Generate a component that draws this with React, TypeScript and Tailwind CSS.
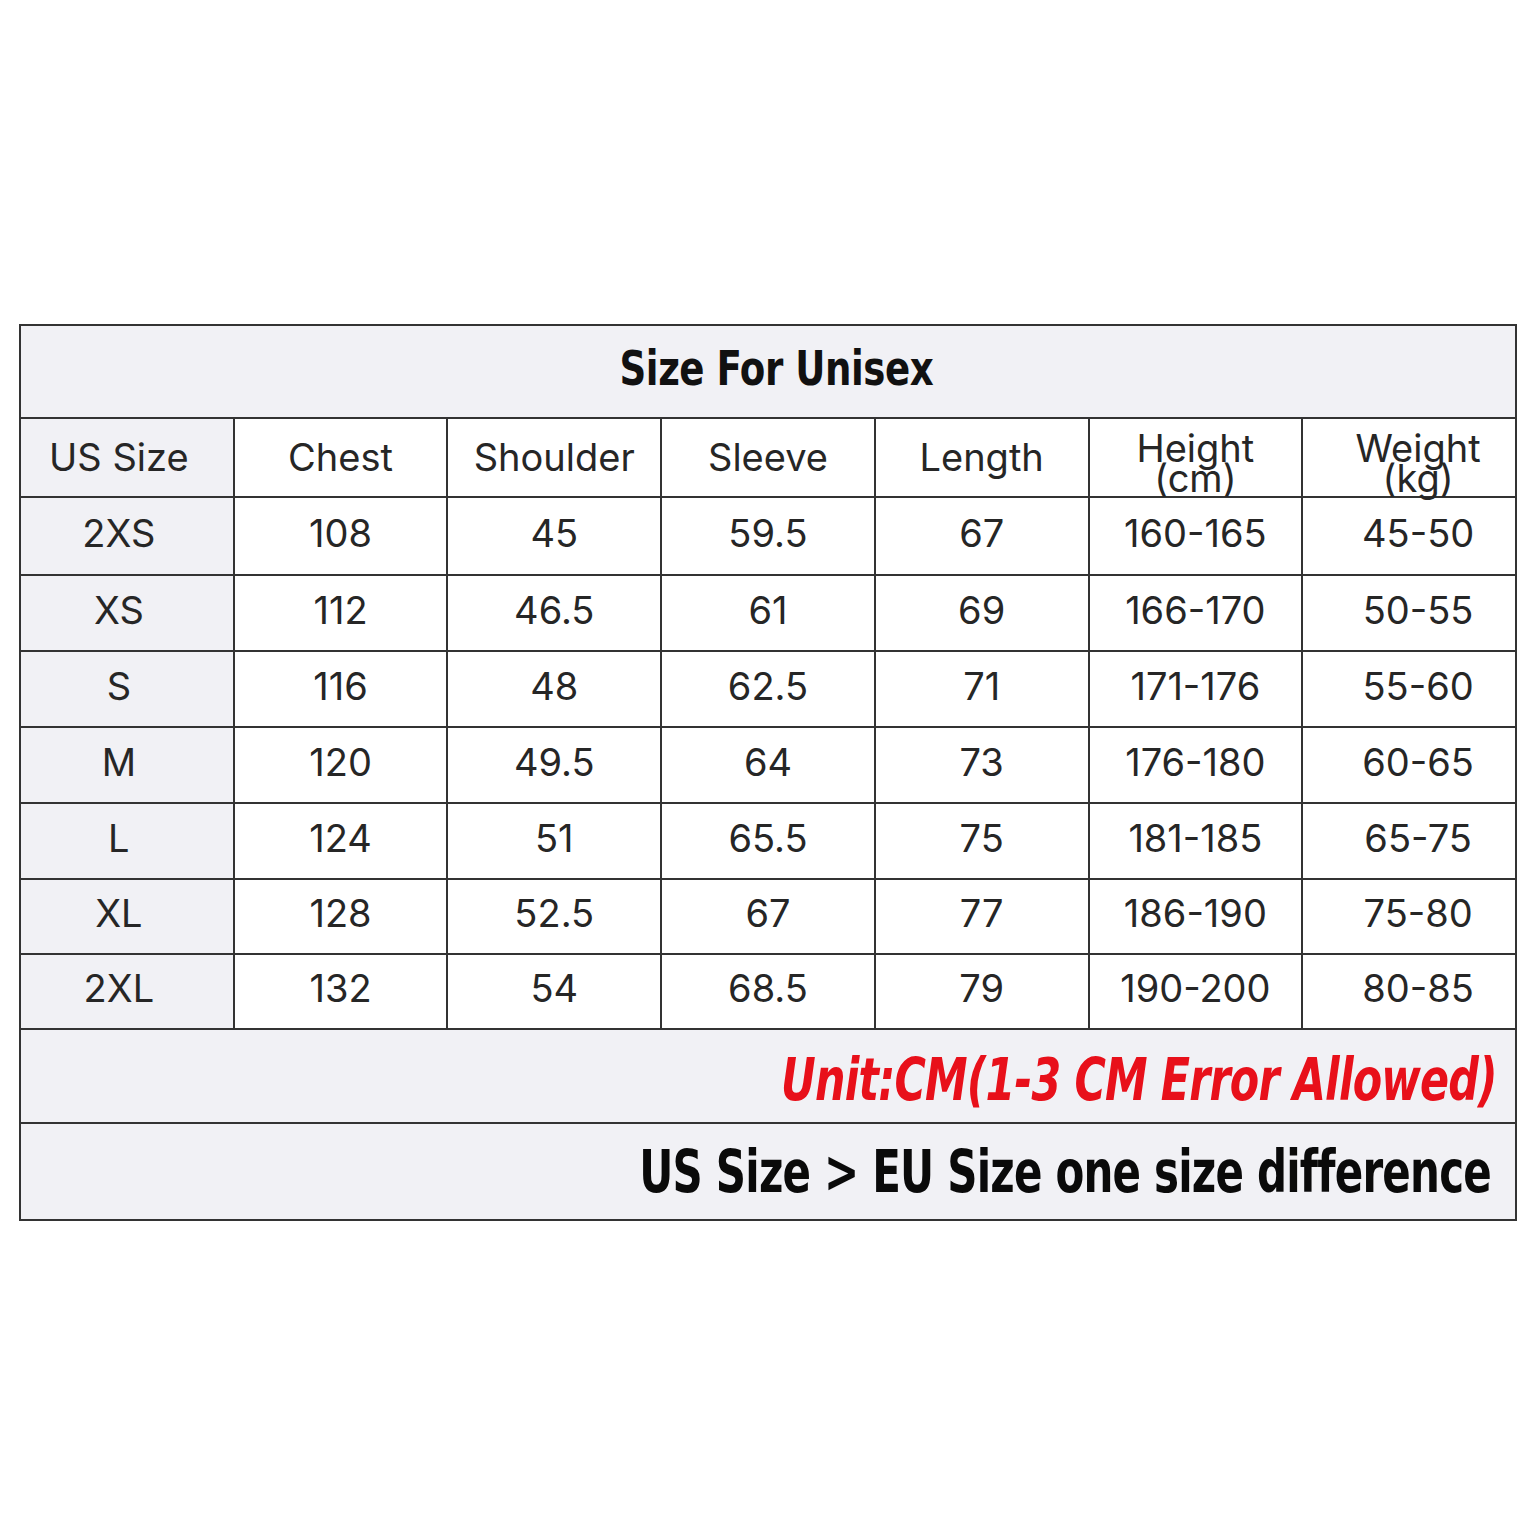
import React from "react";

const headers: { a: string; b?: string }[] = [
  { a: "US Size" },
  { a: "Chest" },
  { a: "Shoulder" },
  { a: "Sleeve" },
  { a: "Length" },
  { a: "Height", b: "(cm)" },
  { a: "Weight", b: "(kg)" },
];

const rows: { h: string; cells: string[] }[] = [
  { h: "h-[78px]", cells: ["2XS", "108", "45", "59.5", "67", "160-165", "45-50"] },
  { h: "h-[76px]", cells: ["XS", "112", "46.5", "61", "69", "166-170", "50-55"] },
  { h: "h-[76px]", cells: ["S", "116", "48", "62.5", "71", "171-176", "55-60"] },
  { h: "h-[76px]", cells: ["M", "120", "49.5", "64", "73", "176-180", "60-65"] },
  { h: "h-[76px]", cells: ["L", "124", "51", "65.5", "75", "181-185", "65-75"] },
  { h: "h-[75px]", cells: ["XL", "128", "52.5", "67", "77", "186-190", "75-80"] },
  { h: "h-[75px]", cells: ["2XL", "132", "54", "68.5", "79", "190-200", "80-85"] },
];

const body = "font-['Inter','Open_Sans',sans-serif] text-[38px] font-normal text-[#262626]";
const cond = "font-['Liberation_Sans_Narrow','DejaVu_Sans_Condensed','Liberation_Sans',sans-serif] font-bold";

const colPad = (i: number) => (i === 0 ? "pr-[16px]" : i === 6 ? "pl-[18px]" : "");

export default function App() {
  return (
    <div className="min-h-[1529px] w-[1529px] bg-white pt-[324px] pl-[19px]">
      <table className="w-[1498px] table-fixed border-collapse border-2 border-[#333]">
        <tbody>
          <tr className="h-[93px] bg-[#f1f1f5]">
            <td colSpan={7} className="border-2 border-[#333] p-0 pb-[8px] text-center">
              <span className={`${cond} inline-block translate-x-[8px] scale-x-[0.86] text-[48px] leading-none tracking-[-0.5px] text-[#111]`}>
                Size For Unisex
              </span>
            </td>
          </tr>
          <tr className="h-[79px]">
            {headers.map((c, i) => (
              <td
                key={c.a}
                className={`border-2 border-[#333] p-0 text-center align-middle ${colPad(i)} ${i === 0 ? "bg-[#f1f1f5]" : "bg-white"}`}
              >
                <div className={`${body} ${c.b ? "leading-[30px] pt-[10px]" : "leading-none pb-[2px]"}`}>
                  <div>{c.a}</div>
                  {c.b && <div>{c.b}</div>}
                </div>
              </td>
            ))}
          </tr>
          {rows.map((r) => (
            <tr key={r.cells[0]} className={r.h}>
              {r.cells.map((c, i) => (
                <td
                  key={i}
                  className={`border-2 border-[#333] p-0 pb-[6px] text-center align-middle ${colPad(i)} ${i === 0 ? "bg-[#f1f1f5]" : "bg-white"}`}
                >
                  <span className={`${body} leading-none`}>{c}</span>
                </td>
              ))}
            </tr>
          ))}
          <tr className="h-[94px] bg-[#f1f1f5]">
            <td colSpan={7} className="border-2 border-[#333] p-0 pr-[18px] text-right">
              <span className={`${cond} inline-block origin-right scale-x-[0.82] translate-y-[4px] italic text-[58px] leading-none tracking-[-1px] text-[#e8101a]`}>
                Unit:CM(1-3 CM Error Allowed)
              </span>
            </td>
          </tr>
          <tr className="h-[97px] bg-[#f1f1f5]">
            <td colSpan={7} className="border-2 border-[#333] p-0 pr-[24px] text-right">
              <span className={`${cond} inline-block origin-right scale-x-[0.805] text-[58px] leading-none tracking-[-1px] text-[#0a0a0a]`}>
                US Size &gt; EU Size one size difference
              </span>
            </td>
          </tr>
        </tbody>
      </table>
    </div>
  );
}
